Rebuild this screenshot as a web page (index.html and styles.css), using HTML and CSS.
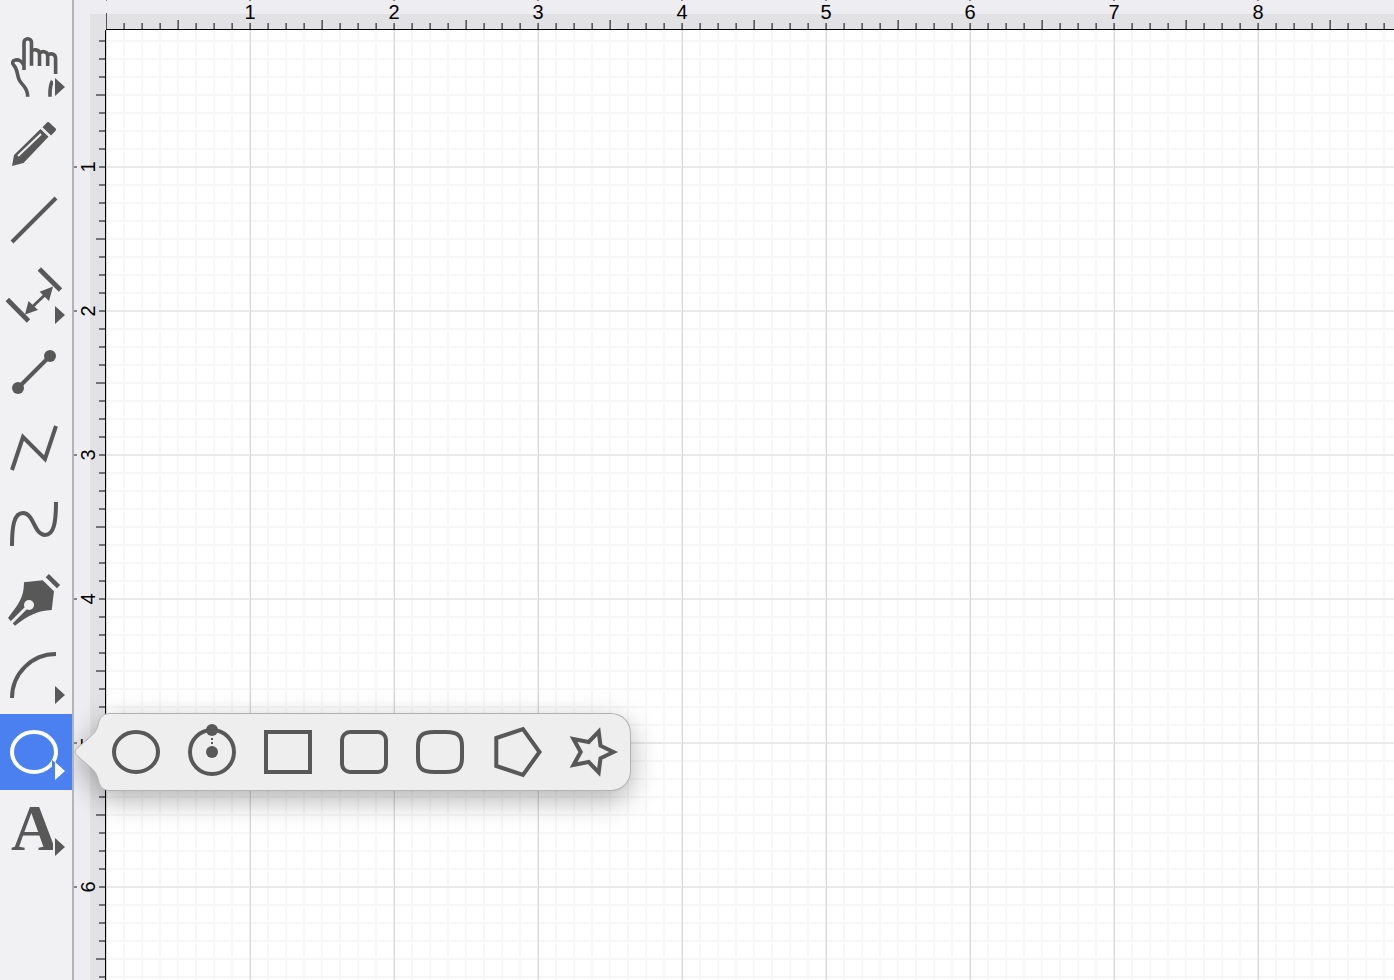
FILE: index.html
```html
<!DOCTYPE html>
<html lang="en">
<head>
<meta charset="utf-8">
<title>Drawing canvas</title>
<link rel="stylesheet" href="styles.css">
</head>
<body>
<nav class="toolbar" aria-label="Tools">
  <button class="tool" type="button" aria-label="Hand">
    <svg class="icon" viewBox="0 0 72 76"><path d="M24 40V12.500a3.700 3.700 0 0 1 7.500 0V35.700M31.500 21.500C33 19 39.500 18.800 39.500 24V36M39.500 23.500C41 21 47.700 20.500 47.700 26V36M47.700 25.500C49.500 23 55.600 23 55.600 28.500V44M24 36C22.500 31 18.500 29.500 15.500 30C12.500 30.500 11.500 33 14 35.500C18 40 17 46 19.500 50.500C22.500 56 27.700 57 27.700 66.700M52.500 51C49.500 56 50 61 50 66.700" stroke-width="3.600"/><path class="halo" d="M53 46h3v21h-3z"/><path class="more" d="M55 48l10 9-10 9z"/></svg>
  </button>
  <button class="tool" type="button" aria-label="Pencil">
    <svg class="icon" viewBox="0 0 72 76"><path class="solid" d="M12 60L14 49 40.500 23 48.500 30.700 23.500 57zM42.500 21.300L46.500 17Q48 15.200 49.500 16.700L55.700 22.500Q56.700 23.700 55.200 25.200L51 29.500z"/><path class="cut" d="M18 50L41 28" stroke-width="2"/></svg>
  </button>
  <button class="tool" type="button" aria-label="Line">
    <svg class="icon" viewBox="0 0 72 76"><path d="M12 60L56 16"/></svg>
  </button>
  <button class="tool" type="button" aria-label="Dimension">
    <svg class="icon" viewBox="0 0 72 76"><path d="M39.300 11L60.500 32M7.300 41.500L28.500 63" stroke-width="4.800"/><path d="M29 52L49 33" stroke-width="3"/><path class="solid" d="M53 28.500L39.700 33.700 49 43zM25 56.500L28.500 43 38 52z"/><path class="more" d="M55 48l10 9-10 9z"/></svg>
  </button>
  <button class="tool" type="button" aria-label="Segment">
    <svg class="icon" viewBox="0 0 72 76"><path d="M18 54L50 22"/><circle class="solid" cx="18" cy="54" r="6"/><circle class="solid" cx="50" cy="22" r="6"/></svg>
  </button>
  <button class="tool" type="button" aria-label="Polyline">
    <svg class="icon" viewBox="0 0 72 76"><path d="M12 60L23 27 45 49 56 16"/></svg>
  </button>
  <button class="tool" type="button" aria-label="Curve">
    <svg class="icon" viewBox="0 0 72 76"><path d="M12 60C12 40 14 27 23 27C34 27 34 49 45 49C54 49 56 36 56 16"/></svg>
  </button>
  <button class="tool" type="button" aria-label="Pen">
    <svg class="icon" viewBox="0 0 72 76"><path class="solid" d="M24 20.300L42.700 18.300 54 29.300 51.700 48C37 49 29 53 15 63.700L8 56C18 43 24 36 24 20.300z"/><path class="cut" d="M10.500 61.500L29 43" stroke-width="3"/><circle class="hole" cx="29" cy="43" r="5"/><path d="M47.300 13.700L58.500 24.700" stroke-width="4.500"/></svg>
  </button>
  <button class="tool" type="button" aria-label="Arc">
    <svg class="icon" viewBox="0 0 72 76"><path d="M12 60A44 44 0 0 1 56 16"/><path class="more" d="M55 48l10 9-10 9z"/></svg>
  </button>
  <button class="tool tool-active" type="button" aria-label="Shapes" aria-expanded="true">
    <svg class="icon" viewBox="0 0 72 76"><ellipse cx="34" cy="38" rx="22" ry="20"/><path class="halo" d="M52 46l12 10-12 10z"/><path class="more" d="M55 48l10 9-10 9z"/></svg>
  </button>
  <button class="tool" type="button" aria-label="Text">
    <svg class="icon" viewBox="0 0 72 76"><text class="letter" x="11" y="60">A</text><path class="halo" d="M53 46h8v20h-8z"/><path class="more" d="M55 48l10 9-10 9z"/></svg>
  </button>
</nav>
<main class="workspace">
  <div class="corner"></div>
  <ol class="ruler-top">
    <li>1</li><li>2</li><li>3</li><li>4</li><li>5</li><li>6</li><li>7</li><li>8</li>
  </ol>
  <ol class="ruler-left">
    <li><span>1</span></li><li><span>2</span></li><li><span>3</span></li><li><span>4</span></li><li><span>5</span></li><li><span>6</span></li>
  </ol>
  <section class="canvas" aria-label="Canvas"></section>
  <div class="popover" role="toolbar" aria-label="Shapes">
    <svg class="pointer" viewBox="0 0 40 78"><path class="pointer-fill" d="M40 .5H36C29 .5 26 4 24.500 10C23 17 21 20 15 25L3 35.500Q-1 39 3 42.500L15 53C21 58 23 61 24.500 68C26 74 29 77.500 36 77.500H40z"/><path class="pointer-edge" d="M40 .5H36C29 .5 26 4 24.500 10C23 17 21 20 15 25L3 35.500Q-1 39 3 42.500L15 53C21 58 23 61 24.500 68C26 74 29 77.500 36 77.500H40"/></svg>
    <button class="shape" type="button" aria-label="Ellipse"><svg class="icon" viewBox="0 0 76 76"><ellipse cx="38" cy="38" rx="22" ry="20"/></svg></button>
    <button class="shape" type="button" aria-label="Circle by radius"><svg class="icon" viewBox="0 0 76 76"><circle cx="38" cy="38" r="22"/><path d="M38 24V34" stroke-width="2" stroke-dasharray="2 2"/><circle class="solid" cx="38" cy="38" r="6"/><circle class="solid" cx="38" cy="16" r="6"/></svg></button>
    <button class="shape" type="button" aria-label="Rectangle"><svg class="icon" viewBox="0 0 76 76"><rect x="16" y="18" width="44" height="40"/></svg></button>
    <button class="shape" type="button" aria-label="Rounded rectangle"><svg class="icon" viewBox="0 0 76 76"><rect x="16" y="18" width="44" height="40" rx="8"/></svg></button>
    <button class="shape" type="button" aria-label="Superellipse"><svg class="icon" viewBox="0 0 76 76"><path d="M32 18H44C56 18 60 22 60 32V44C60 54 56 58 44 58H32C20 58 16 54 16 44V32C16 22 20 18 32 18z"/></svg></button>
    <button class="shape" type="button" aria-label="Polygon"><svg class="icon" viewBox="0 0 76 76"><path d="M18.300 24L45 15.200 61.500 38 45 60.800 18.300 52z"/></svg></button>
    <button class="shape" type="button" aria-label="Star"><svg class="icon" viewBox="0 0 76 76"><path d="M59.500 38L46.500 31.700 44.700 17.700 34.700 28 19.500 25 26.700 38 19.500 51 34.700 48 44.700 58.300 46.500 44.300z"/></svg></button>
  </div>
</main>
</body>
</html>
```
FILE: styles.css
```css
* {
  box-sizing: border-box;
}

body {
  margin: 0;
  display: flex;
  height: 100vh;
  overflow: hidden;
  font-family: "Liberation Sans", Arial, sans-serif;
  font-size: 20px;
  line-height: 24px;
  color: #000;
}

button {
  margin: 0;
  padding: 0;
  border: 0;
  background: none;
}

/* Tool column */
.toolbar {
  flex: none;
  display: flex;
  flex-direction: column;
  width: 74px;
  padding-top: 30px;
  background: #f1f1f4;
  border-right: 2px solid #b4b4b6;
}

.tool {
  --ink: #585858;
  --ground: #f1f1f4;
  flex: none;
  height: 76px;
}

.tool-active {
  --ink: #fff;
  --ground: #4a80f0;
  background: var(--ground);
}

.icon {
  display: block;
  width: 100%;
  height: 76px;
  fill: none;
  stroke: var(--ink);
  stroke-width: 4;
  stroke-miterlimit: 10;
}

.solid,
.more {
  fill: var(--ink);
  stroke: none;
}

.halo,
.hole {
  fill: var(--ground);
  stroke: none;
}

.cut {
  stroke: var(--ground);
}

.letter {
  font-family: "Liberation Serif", "Times New Roman", serif;
  font-size: 65px;
  font-weight: bold;
  fill: var(--ink);
  stroke: none;
}

/* Rulers and canvas */
.workspace {
  flex: 1;
  min-width: 0;
  position: relative;
  display: grid;
  grid-template-columns: 32px minmax(0, 1fr);
  grid-template-rows: 30px minmax(0, 1fr);
  overflow: hidden;
}

.corner {
  background: linear-gradient(#e2e2e5, #e2e2e5) 16px 14px no-repeat #ededf2;
}

.ruler-top,
.ruler-left {
  display: flex;
  margin: 0;
  list-style: none;
  overflow: hidden;
}

.ruler-top {
  padding: 0 0 0 72px;
  border-bottom: 1px solid #000;
  background:
    linear-gradient(#55555a, #55555a) 0 100% / 1px 16px no-repeat,
    linear-gradient(90deg, #8a8a8c 1px, #5c5c5e 1px 2px, transparent 2px) 71px 100% / 144px 9px repeat-x,
    linear-gradient(90deg, #8a8a8c 1px, #5c5c5e 1px 2px, transparent 2px) 17px 100% / 18px 6px repeat-x,
    linear-gradient(90deg, #888 2px, transparent 2px) 143px 0 / 144px 1px repeat-x,
    linear-gradient(#ededf2 14px, #e2e2e5 14px);
}

.ruler-top li {
  flex: none;
  width: 144px;
  text-align: center;
}

.ruler-left {
  flex-direction: column;
  padding: 65px 0 0;
  border-right: 1px solid #000;
  background:
    linear-gradient(#737375 2px, transparent 2px) 100% 64px / 9px 144px repeat-y,
    linear-gradient(#737375 2px, transparent 2px) 100% 10px / 6px 18px repeat-y,
    linear-gradient(#888 2px, transparent 2px) 0 136px / 3px 144px repeat-y,
    linear-gradient(90deg, #ededf2 16px, #e2e2e5 16px);
}

.ruler-left li {
  flex: none;
  display: flex;
  align-items: center;
  height: 144px;
  padding-left: 2px;
}

.ruler-left span {
  width: 24px;
  text-align: center;
  transform: rotate(-90deg);
}

.canvas {
  background:
    linear-gradient(90deg, #f0f0f0 1px, #d8d8d8 1px 2px, transparent 2px) 143px 0 / 144px 100%,
    linear-gradient(#e9e9e9 2px, transparent 2px) 0 136px / 100% 144px,
    linear-gradient(90deg, #f7f7f7 2px, transparent 2px) 17px 0 / 18px 100%,
    linear-gradient(#f7f7f7 2px, transparent 2px) 0 10px / 100% 18px,
    #fff;
}

/* Shape palette that floats over the canvas */
.popover {
  --ink: #585858;
  position: absolute;
  left: 0;
  top: 713px;
  display: flex;
  height: 78px;
  padding: 1px 1px 1px 24px;
  filter: drop-shadow(0 9px 14px rgba(0, 0, 0, 0.3));
}

.popover::before {
  content: "";
  position: absolute;
  inset: 0 0 0 39px;
  background: #eeeeef;
  border: 1px solid #b2b2b4;
  border-left: 0;
  border-radius: 0 20px 20px 0;
}

.pointer {
  position: absolute;
  left: 0;
  top: 0;
  width: 40px;
  height: 78px;
}

.pointer-fill {
  fill: #eeeeef;
}

.pointer-edge {
  fill: none;
  stroke: #b2b2b4;
}

.shape {
  position: relative;
  width: 76px;
}
```
